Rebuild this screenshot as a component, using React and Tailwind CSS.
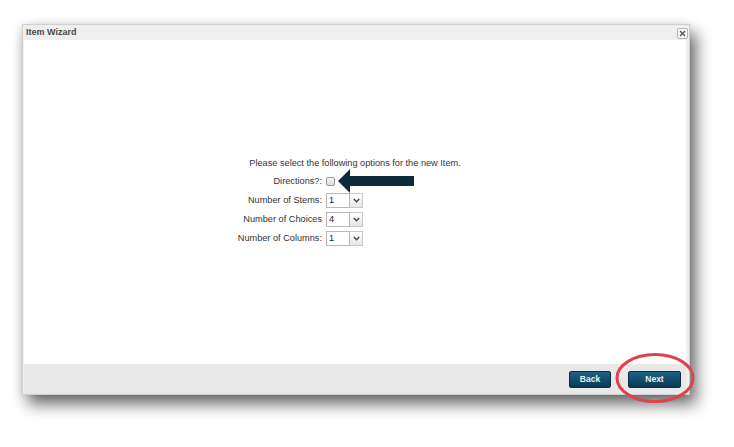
import React from 'react';

const font = { fontFamily: '"Liberation Sans", Arial, sans-serif' };

function Chevron() {
  return (
    <svg width="7" height="5" viewBox="0 0 7 5" className="block">
      <path d="M0.8 1 L3.5 3.8 L6.2 1" fill="none" stroke="#444" strokeWidth="1.4" />
    </svg>
  );
}

function Combo({ value }) {
  return (
    <div className="flex w-[37px] h-[15px]">
      <div className="flex-1 flex items-center pl-[2px] border border-[#b8b8b8] bg-white text-[#222]">
        {value}
      </div>
      <div className="w-[13px] flex items-center justify-center border border-l-0 border-[#c8c8c8] bg-gradient-to-b from-white to-[#e6e6e6]">
        <Chevron />
      </div>
    </div>
  );
}

function Row({ label, children }) {
  return (
    <div className="grid grid-cols-[298px_auto] gap-x-[4px] h-[19px] items-center">
      <div className="text-right">{label}</div>
      <div className="flex items-center">{children}</div>
    </div>
  );
}

function WizardButton({ children, width }) {
  return (
    <button
      className={`${width} h-[17px] rounded-[2px] border border-[#083044] bg-gradient-to-b from-[#1c6384] to-[#0a3950] text-[#e8f0f4] text-[8.5px] font-bold`}
    >
      {children}
    </button>
  );
}

export default function App() {
  return (
    <div className="relative w-[734px] h-[447px] overflow-hidden bg-white pt-[24px] pl-[22px]" style={font}>
      {/* Dialog */}
      <div className="w-[668px] h-[371px] flex flex-col border border-[#cfcfcf] bg-[#efefef] shadow-[6px_9px_15px_rgba(0,0,0,0.6),-2px_0_8px_rgba(0,0,0,0.08)]">
        {/* Title bar */}
        <div className="h-[15px] flex items-center justify-between pl-[3px] pr-[1px]">
          <span className="text-[9px] font-bold text-[#4a4a4a]">Item Wizard</span>
          <div className="w-[11px] h-[11px] mt-[1px] rounded-[2px] border border-[#b5b5b5] bg-[#f7f7f7] flex items-center justify-center">
            <svg width="7" height="7" viewBox="0 0 7 7">
              <path d="M1 1 L6 6 M6 1 L1 6" stroke="#555" strokeWidth="1.3" />
            </svg>
          </div>
        </div>

        {/* Body */}
        <div className="flex-1 ml-[1px] mr-[3px] bg-white text-[9.2px] text-[#333]">
          <div className="pt-[117px]">
            <div className="h-[12px] leading-[12px] text-center">Please select the following options for the new Item.</div>
            <div className="mt-[3px]">
              <Row label="Directions?:">
                <div className="w-[9px] h-[9px] rounded-[2px] border border-[#9a9a9a] bg-gradient-to-b from-[#f4f4f4] to-[#dcdcdc]" />
              </Row>
              <Row label="Number of Stems:">
                <Combo value="1" />
              </Row>
              <Row label="Number of Choices">
                <Combo value="4" />
              </Row>
              <Row label="Number of Columns:">
                <Combo value="1" />
              </Row>
            </div>
          </div>
        </div>

        {/* Footer */}
        <div className="h-[30px] ml-[1px] mr-[3px] bg-[#e8e8e8] flex items-center justify-end gap-[17px] pr-[5px]">
          <WizardButton width="w-[42px]">Back</WizardButton>
          <WizardButton width="w-[53px]">Next</WizardButton>
        </div>
      </div>

      {/* Annotation arrow */}
      <svg className="absolute left-[336px] top-[167px]" width="80" height="28" viewBox="0 0 80 28">
        <polygon points="2,14 14,2 14,9 78,9 78,19 14,19 14,26" fill="#0c2c3e" />
      </svg>

      {/* Annotation ellipse */}
      <svg className="absolute left-[614px] top-[352px]" width="82" height="52" viewBox="0 0 82 52">
        <ellipse cx="41" cy="26" rx="38" ry="23.5" fill="none" stroke="#e0414f" strokeWidth="3" />
      </svg>
    </div>
  );
}
